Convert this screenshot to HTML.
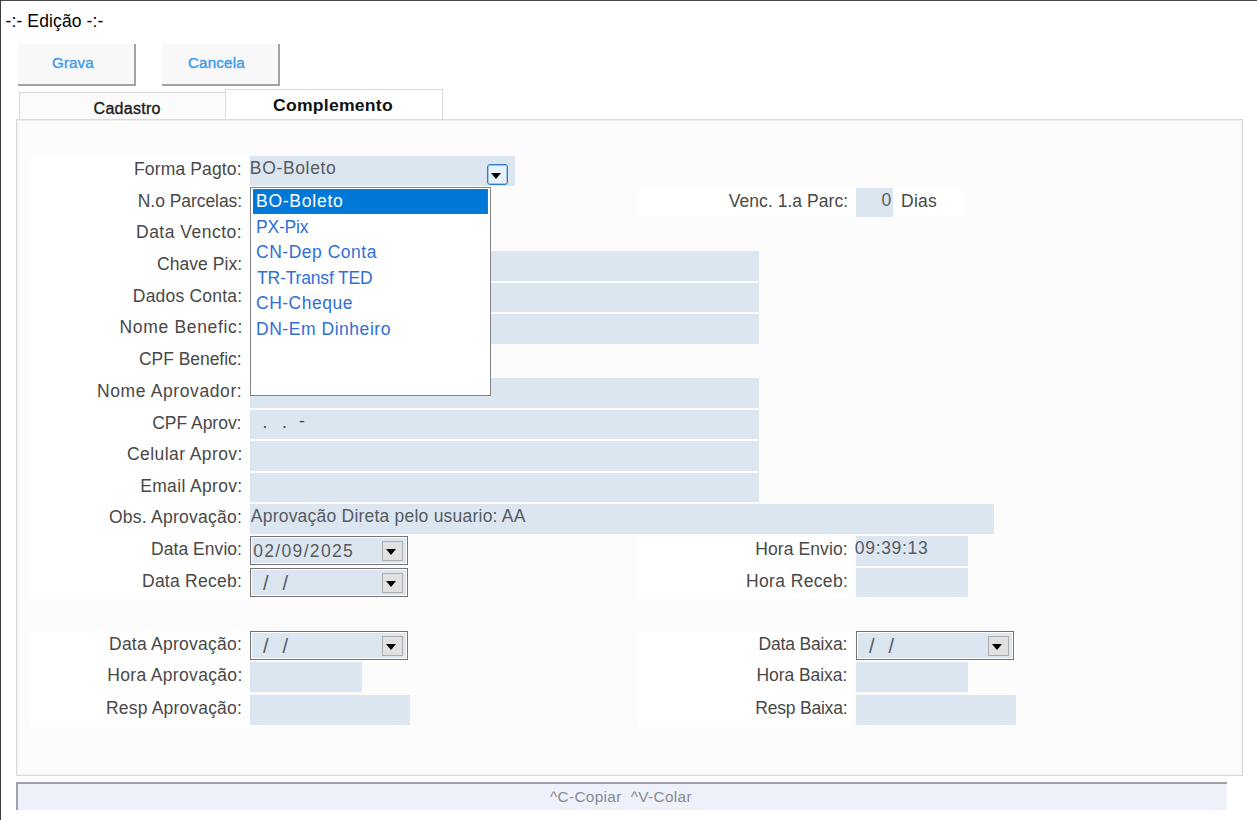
<!DOCTYPE html>
<html lang="pt-BR">
<head>
<meta charset="utf-8">
<title>-:- Edição -:-</title>
<style>
html,body{margin:0;padding:0;background:#fff;}
body{width:1257px;height:820px;position:relative;overflow:hidden;font-family:"Liberation Sans",sans-serif;}
div,span,h1,label,button,li,output,footer,section{position:absolute;box-sizing:border-box;margin:0;padding:0;}
h1{font-weight:400;}
button{font:inherit;text-align:left;cursor:default;border-style:solid;border-color:transparent;border-width:0;border-radius:0;}
ul{margin:0;padding:0;list-style:none;}
.t{white-space:pre;}
.k{-webkit-text-stroke:0.35px currentColor;}
.win-top{left:0;top:0;width:1257px;height:1px;background:#4a4a4a;}
.win-left{left:0;top:0;width:1px;height:820px;background:#3c3c3c;}
.btn{top:44px;height:42px;width:118px;background:#f8f8f8;border-right:2px solid #a2a2a2;border-bottom:2px solid #a2a2a2;}
.tab{border:1px solid #d9d9d9;border-bottom:none;background:#fbfbfb;}
.tab.sel{background:#fff;}
.panel{left:16px;top:119px;width:1227px;height:657px;background:#fcfcfc;border:1px solid #dadada;box-shadow:inset 0 0 0 1px #f1f1f1;}
.lab{background:#fff;}
.f{background:#dce6f1;}
.date{border:1px solid #747474;background:#dce6f1;box-shadow:inset 0 0 0 1px #fff;}
.dbtn{width:21px;height:20px;background:#e1e1e1;border:1px solid #adadad;}
.tri{width:0;height:0;border-left:5.5px solid transparent;border-right:5.5px solid transparent;border-top:6px solid #000;}
.list{left:250px;top:187px;width:241px;height:209px;background:#fff;border:1px solid #838383;}
.sel-item{left:253px;top:189px;width:235px;height:25px;background:#0078d7;outline:1px dotted #7d6a5c;outline-offset:-1px;}
.cbtn{left:487px;top:164px;width:21px;height:21px;background:#e9f3fd;border:1px solid #3379cc;border-radius:3px;box-shadow:inset 0 0 0 1px rgba(70,140,220,.45);}
.status{left:16px;top:782px;width:1211px;height:28px;background:#eef0fa;border-top:2px solid #9da1a9;border-left:2px solid #9da1a9;}
</style>
</head>
<body>
<div class="win-top"></div><div class="win-left"></div>
<div class="tab" style="left:19px;top:92px;width:207px;height:28px"></div>
<div class="tab sel" style="left:225px;top:89px;width:218px;height:31px"></div>
<section class="panel"></section>
<div class="lab" style="left:29px;top:156px;width:220px;height:442px"></div>
<div class="lab" style="left:29px;top:631px;width:220px;height:96px"></div>
<div class="lab" style="left:637px;top:188px;width:328px;height:29px"></div>
<div class="lab" style="left:637px;top:536px;width:215px;height:62px"></div>
<div class="lab" style="left:637px;top:631px;width:215px;height:96px"></div>
<div class="f" style="left:250px;top:156px;width:265px;height:30px"></div>
<div class="f" style="left:250px;top:251px;width:509px;height:30px"></div>
<div class="f" style="left:250px;top:283px;width:509px;height:29px"></div>
<div class="f" style="left:250px;top:314px;width:509px;height:30px"></div>
<div class="f" style="left:250px;top:378px;width:509px;height:30px"></div>
<div class="f" style="left:250px;top:410px;width:509px;height:29px"></div>
<div class="f" style="left:250px;top:441px;width:509px;height:30px"></div>
<div class="f" style="left:250px;top:473px;width:509px;height:29px"></div>
<div class="f" style="left:250px;top:504px;width:744px;height:30px"></div>
<div class="f" style="left:856px;top:188px;width:37px;height:29px"></div>
<div class="f" style="left:856px;top:536px;width:112px;height:30px"></div>
<div class="f" style="left:856px;top:568px;width:112px;height:29px"></div>
<div class="f" style="left:856px;top:662px;width:112px;height:30px"></div>
<div class="f" style="left:856px;top:695px;width:160px;height:30px"></div>
<div class="f" style="left:250px;top:662px;width:112px;height:30px"></div>
<div class="f" style="left:250px;top:695px;width:160px;height:30px"></div>
<div class="date" style="left:250px;top:536px;width:158px;height:29px"></div><div class="dbtn" style="left:382px;top:541px"></div><div class="tri" style="left:386px;top:548.8px"></div>
<div class="date" style="left:250px;top:568px;width:158px;height:29px"></div><div class="dbtn" style="left:382px;top:573px"></div><div class="tri" style="left:386px;top:580.8px"></div>
<div class="date" style="left:250px;top:631px;width:158px;height:29px"></div><div class="dbtn" style="left:382px;top:636px"></div><div class="tri" style="left:386px;top:643.8px"></div>
<div class="date" style="left:856px;top:631px;width:158px;height:29px"></div><div class="dbtn" style="left:988px;top:636px"></div><div class="tri" style="left:992px;top:643.8px"></div>
<div class="cbtn"></div><div class="tri" style="left:491.3px;top:172.7px"></div>
<div class="list"></div><div class="sel-item"></div>
<footer class="status"></footer>
<h1 class="t" style="left:5.5px;top:11px;font-size:17.5px;line-height:21px;color:#000;letter-spacing:0.12px">-:- Edição -:-</h1>
<button type="button" class="btn" style="left:18px"><span class="t k" style="left:33.5px;top:11px;font-size:14px;line-height:17px;color:#3a9bef;letter-spacing:0.12px;transform:scaleX(1.08);transform-origin:0 0">Grava</span></button>
<button type="button" class="btn" style="left:162px"><span class="t k" style="left:26.2px;top:11px;font-size:14px;line-height:17px;color:#3a9bef;letter-spacing:0.18px;transform:scaleX(1.08);transform-origin:0 0">Cancela</span></button>
<span class="t k" style="left:93.6px;top:99px;font-size:16px;line-height:19px;color:#1a1a1a;letter-spacing:0.27px">Cadastro</span>
<span class="t" style="left:273.2px;top:96px;font-size:16px;line-height:19px;color:#111;letter-spacing:0.21px;font-weight:700;transform:scaleX(1.1);transform-origin:0 0">Complemento</span>
<label class="t" style="left:134.0px;top:159px;font-size:17.5px;line-height:21px;color:#484848;letter-spacing:0.14px">Forma Pagto:</label>
<label class="t" style="left:137.8px;top:191px;font-size:17.5px;line-height:21px;color:#484848;letter-spacing:-0.06px">N.o Parcelas:</label>
<label class="t" style="left:136.0px;top:222px;font-size:17.5px;line-height:21px;color:#484848;letter-spacing:0.5px">Data Vencto:</label>
<label class="t" style="left:157.0px;top:254px;font-size:17.5px;line-height:21px;color:#484848;letter-spacing:0.06px">Chave Pix:</label>
<label class="t" style="left:132.8px;top:286px;font-size:17.5px;line-height:21px;color:#484848;letter-spacing:0.21px">Dados Conta:</label>
<label class="t" style="left:119.5px;top:317px;font-size:17.5px;line-height:21px;color:#484848;letter-spacing:0.67px">Nome Benefic:</label>
<label class="t" style="left:139.0px;top:349px;font-size:17.5px;line-height:21px;color:#484848;letter-spacing:-0.05px">CPF Benefic:</label>
<label class="t" style="left:97.0px;top:381px;font-size:17.5px;line-height:21px;color:#484848;letter-spacing:0.61px">Nome Aprovador:</label>
<label class="t" style="left:152.2px;top:413px;font-size:17.5px;line-height:21px;color:#484848;letter-spacing:-0.02px">CPF Aprov:</label>
<label class="t" style="left:127.0px;top:444px;font-size:17.5px;line-height:21px;color:#484848;letter-spacing:0.42px">Celular Aprov:</label>
<label class="t" style="left:140.2px;top:476px;font-size:17.5px;line-height:21px;color:#484848;letter-spacing:0.34px">Email Aprov:</label>
<label class="t" style="left:109.0px;top:507px;font-size:17.5px;line-height:21px;color:#484848;letter-spacing:0.25px">Obs. Aprovação:</label>
<label class="t" style="left:151.0px;top:539px;font-size:17.5px;line-height:21px;color:#484848;letter-spacing:0.05px">Data Envio:</label>
<label class="t" style="left:142.0px;top:571px;font-size:17.5px;line-height:21px;color:#484848;letter-spacing:0.25px">Data Receb:</label>
<label class="t" style="left:109.0px;top:634px;font-size:17.5px;line-height:21px;color:#484848;letter-spacing:0.25px">Data Aprovação:</label>
<label class="t" style="left:107.2px;top:665px;font-size:17.5px;line-height:21px;color:#484848;letter-spacing:0.34px">Hora Aprovação:</label>
<label class="t" style="left:106.0px;top:698px;font-size:17.5px;line-height:21px;color:#484848;letter-spacing:0.18px">Resp Aprovação:</label>
<label class="t" style="left:728.8px;top:191px;font-size:17.5px;line-height:21px;color:#484848;letter-spacing:0.04px">Venc. 1.a Parc:</label>
<label class="t" style="left:755.2px;top:539px;font-size:17.5px;line-height:21px;color:#484848;letter-spacing:0.1px">Hora Envio:</label>
<label class="t" style="left:746.0px;top:571px;font-size:17.5px;line-height:21px;color:#484848;letter-spacing:0.37px">Hora Receb:</label>
<label class="t" style="left:758.5px;top:634px;font-size:17.5px;line-height:21px;color:#484848;letter-spacing:-0.16px">Data Baixa:</label>
<label class="t" style="left:756.5px;top:665px;font-size:17.5px;line-height:21px;color:#484848;letter-spacing:-0.06px">Hora Baixa:</label>
<label class="t" style="left:755.2px;top:698px;font-size:17.5px;line-height:21px;color:#484848;letter-spacing:-0.2px">Resp Baixa:</label>
<label class="t" style="left:901.0px;top:191px;font-size:17.5px;line-height:21px;color:#484848;letter-spacing:0.24px">Dias</label>
<output class="t" style="left:881.4px;top:190px;font-size:17.5px;line-height:21px;color:#565b62;letter-spacing:0.0px">0</output>
<output class="t" style="left:249.8px;top:158px;font-size:17.5px;line-height:21px;color:#565b62;letter-spacing:0.66px">BO-Boleto</output>
<output class="t" style="left:250.8px;top:506px;font-size:17.5px;line-height:21px;color:#565b62;letter-spacing:0.22px">Aprovação Direta pelo usuario: AA</output>
<output class="t" style="left:253.2px;top:541px;font-size:17.5px;line-height:21px;color:#565b62;letter-spacing:1.33px">02/09/2025</output>
<output class="t" style="left:854.8px;top:538px;font-size:17.5px;line-height:21px;color:#565b62;letter-spacing:0.69px">09:39:13</output>
<output class="t" style="left:263.1px;top:571px;font-size:20px;line-height:24px;color:#565b62;letter-spacing:4.2px">/ /</output>
<output class="t" style="left:263.1px;top:634px;font-size:20px;line-height:24px;color:#565b62;letter-spacing:4.2px">/ /</output>
<output class="t" style="left:869.1px;top:634px;font-size:20px;line-height:24px;color:#565b62;letter-spacing:4.2px">/ /</output>
<output class="t" style="left:262.5px;top:412px;font-size:17.5px;line-height:21px;color:#484848;letter-spacing:0.0px">.</output>
<output class="t" style="left:282.0px;top:412px;font-size:17.5px;line-height:21px;color:#484848;letter-spacing:0.0px">.</output>
<output class="t" style="left:299.0px;top:411px;font-size:17.5px;line-height:21px;color:#484848;letter-spacing:0.0px">-</output>
<span class="t" style="left:550.0px;top:789px;font-size:14px;line-height:17px;color:#878c95;letter-spacing:0.28px;transform:scaleX(1.1);transform-origin:0 0">^C-Copiar  ^V-Colar</span>
<ul>
<li class="t" style="left:256.0px;top:191px;font-size:17.5px;line-height:21px;color:#fff;letter-spacing:0.75px">BO-Boleto</li>
<li class="t" style="left:256.0px;top:217px;font-size:17.5px;line-height:21px;color:#2f6fd6;letter-spacing:-0.2px">PX-Pix</li>
<li class="t" style="left:256.0px;top:242px;font-size:17.5px;line-height:21px;color:#2f6fd6;letter-spacing:0.52px">CN-Dep Conta</li>
<li class="t" style="left:257.0px;top:268px;font-size:17.5px;line-height:21px;color:#2f6fd6;letter-spacing:-0.17px">TR-Transf TED</li>
<li class="t" style="left:256.0px;top:293px;font-size:17.5px;line-height:21px;color:#2f6fd6;letter-spacing:0.5px">CH-Cheque</li>
<li class="t" style="left:256.0px;top:319px;font-size:17.5px;line-height:21px;color:#2f6fd6;letter-spacing:0.54px">DN-Em Dinheiro</li>
</ul>
</body>
</html>
